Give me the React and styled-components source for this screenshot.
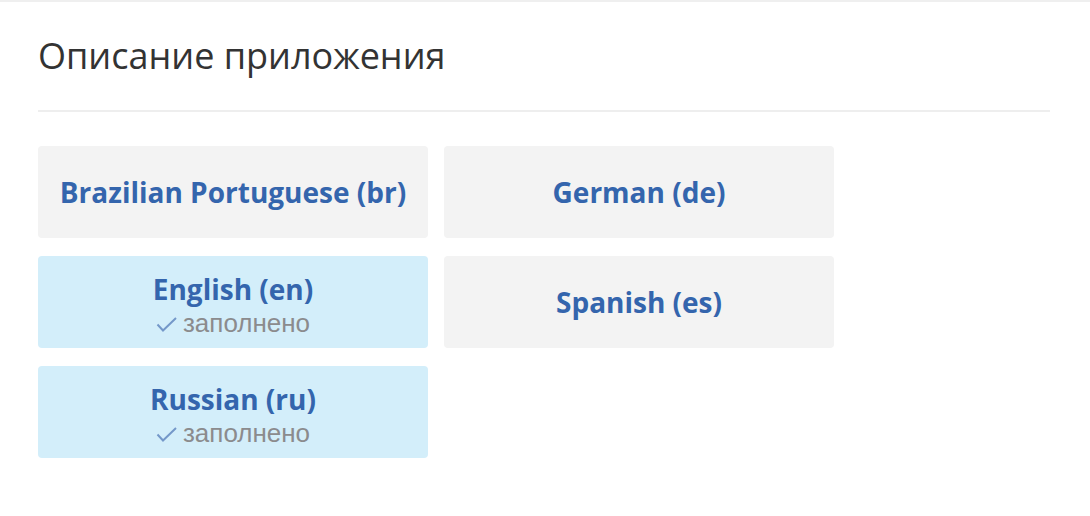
import styled, { createGlobalStyle } from "styled-components";

const GlobalStyle = createGlobalStyle`
  body {
    margin: 0;
    background: #fff;
    font-family: "Open Sans", sans-serif;
  }
`;

const Page = styled.div`
  border-top: 2px solid #efefef;
  padding: 0 40px 0 38px;
`;

const Title = styled.h2`
  margin: 0;
  padding: 28px 0 28px;
  font-size: 36px;
  font-weight: 400;
  line-height: 52px;
  color: #333;
  border-bottom: 2px solid #eeeeee;
`;

const Grid = styled.div`
  display: grid;
  grid-template-columns: 390px 390px;
  grid-auto-rows: 92px;
  gap: 18px 16px;
  margin-top: 34px;
`;

const Card = styled.div`
  display: flex;
  flex-direction: column;
  align-items: center;
  justify-content: center;
  border-radius: 4px;
  background: ${(p) => (p.$filled ? "#d3eefa" : "#f3f3f3")};
  cursor: pointer;
`;

const Name = styled.div`
  font-size: 28px;
  font-weight: 700;
  line-height: ${(p) => (p.$withStatus ? "42px" : "34px")};
  color: #3465ad;
`;

const Status = styled.div`
  display: flex;
  align-items: center;
  gap: 6px;
  font-family: "Liberation Sans", Arial, sans-serif;
  font-size: 26px;
  line-height: 26px;
  color: #8b8b8d;

  svg {
    margin-top: 2px;
  }
`;

const Check = () => (
  <svg width="21" height="15" viewBox="0 0 21 15" fill="none">
    <path d="M1.5 7.5 L7 13.5 L20 1" stroke="#7498c9" strokeWidth="2" />
  </svg>
);

const languages = [
  { name: "Brazilian Portuguese (br)" },
  { name: "German (de)" },
  { name: "English (en)", filled: true },
  { name: "Spanish (es)" },
  { name: "Russian (ru)", filled: true },
];

export default function App() {
  return (
    <>
      <GlobalStyle />
      <Page>
        <Title>Описание приложения</Title>
        <Grid>
          {languages.map((l) => (
            <Card key={l.name} $filled={l.filled}>
              <Name $withStatus={l.filled}>{l.name}</Name>
              {l.filled && (
                <Status>
                  <Check />
                  заполнено
                </Status>
              )}
            </Card>
          ))}
        </Grid>
      </Page>
    </>
  );
}
